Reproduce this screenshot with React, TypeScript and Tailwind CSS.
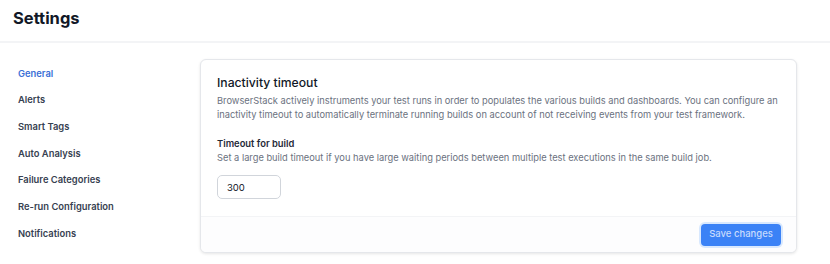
import React, { useState } from 'react';

const navItems = [
  'General',
  'Alerts',
  'Smart Tags',
  'Auto Analysis',
  'Failure Categories',
  'Re-run Configuration',
  'Notifications',
];

export default function App() {
  const [active, setActive] = useState('General');
  const [timeout, setTimeoutValue] = useState('300');

  return (
    <div className="w-[830px] h-[264px] bg-white overflow-hidden font-['Inter',sans-serif] text-[#111827]">
      <header className="h-[43px] flex items-center px-[13px] pb-[6px] border-b-2 border-[#f3f4f6]">
        <h1 className="text-[16.5px] font-bold leading-[20px]">Settings</h1>
      </header>

      <div className="flex pt-[16px]">
        <nav className="w-[200px] shrink-0 flex flex-col pl-[18px] pt-[7.5px] gap-[13.7px]">
          {navItems.map(item => (
            <button
              key={item}
              onClick={() => setActive(item)}
              className={`text-left text-[9.4px] font-semibold leading-[13px] ${
                active === item ? 'text-[#3b6fd6]' : 'text-[#374151]'
              }`}
            >
              {item}
            </button>
          ))}
        </nav>

        <section className="w-[597px] rounded-[6px] border border-[#e5e7eb] shadow-[0_1px_3px_rgba(0,0,0,0.1)] bg-white overflow-hidden">
          <div className="pl-[16px] pr-[12px] pt-[15px] pb-[17px]">
            <h2 className="text-[12.2px] font-medium leading-[16px] text-[#111827]">Inactivity timeout</h2>
            <p className="mt-[3px] text-[9.3px] leading-[13.5px] text-[#6b7280]">
              BrowserStack actively instruments your test runs in order to populates the various builds and dashboards. You can configure an inactivity timeout to automatically terminate running builds on account of not receiving events from your test framework.
            </p>

            <label className="block mt-[15.5px] text-[9.4px] font-semibold leading-[13px] text-[#1f2937]">Timeout for build</label>
            <p className="mt-[1px] text-[9.3px] leading-[13px] text-[#6b7280]">
              Set a large build timeout if you have large waiting periods between multiple test executions in the same build job.
            </p>
            <input
              value={timeout}
              onChange={e => setTimeoutValue(e.target.value)}
              className="block mt-[11.5px] w-[64px] h-[24px] px-[9px] rounded-[5px] border border-[#d1d5db] text-[9.5px] text-[#111827] outline-none"
            />
          </div>

          <div className="border-t border-[#f3f4f6] bg-[#fdfdfe] flex justify-end px-[15px] py-[6.5px]">
            <button className="h-[22px] w-[80px] rounded-[4px] bg-[#3b82f6] text-[9.5px] font-medium text-[#c7dbfd] shadow-[0_0_0_2px_rgba(191,219,254,0.6)]">
              Save changes
            </button>
          </div>
        </section>
      </div>
    </div>
  );
}
